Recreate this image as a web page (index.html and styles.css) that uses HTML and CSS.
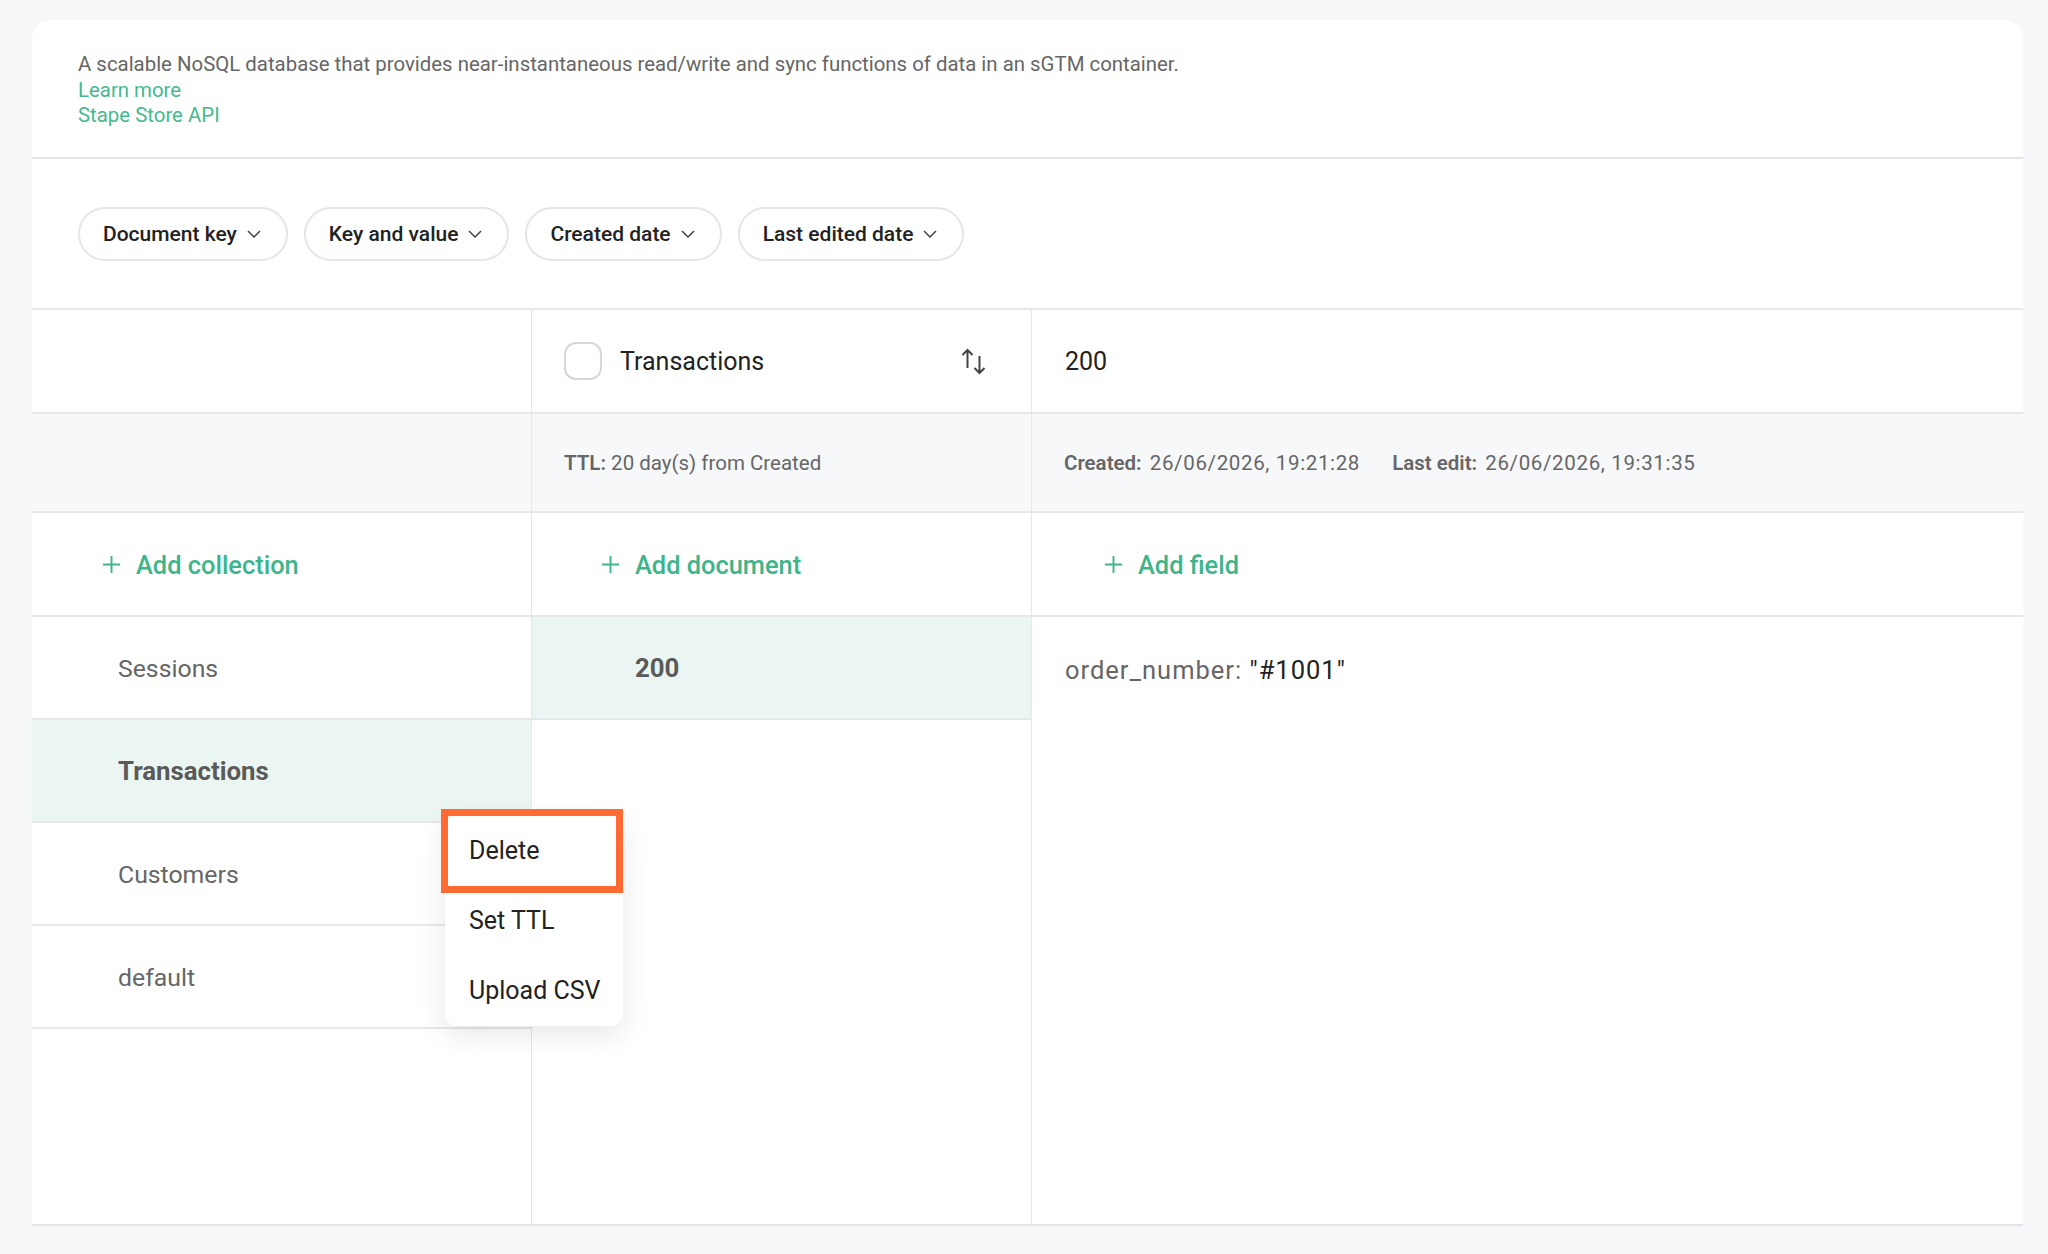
FILE: index.html
```html
<!DOCTYPE html>
<html lang="en">
<head>
  <meta charset="UTF-8" />
  <title>Stape Store</title>
  <link rel="stylesheet" href="styles.css">
</head>
<body>

<div class="card">
  <div class="intro">
    <p>A scalable NoSQL database that provides near-instantaneous read/write and sync functions of data in an sGTM container.</p>
    <a href="#">Learn more</a>
    <a href="#">Stape Store API</a>
  </div>

  <div class="filters">
    <button class="pill">Document key <svg class="chev" viewBox="0 0 14 8"><path d="M1 1l6 6 6-6"/></svg></button>
    <button class="pill">Key and value <svg class="chev" viewBox="0 0 14 8"><path d="M1 1l6 6 6-6"/></svg></button>
    <button class="pill">Created date <svg class="chev" viewBox="0 0 14 8"><path d="M1 1l6 6 6-6"/></svg></button>
    <button class="pill">Last edited date <svg class="chev" viewBox="0 0 14 8"><path d="M1 1l6 6 6-6"/></svg></button>
  </div>

  <div class="grid">
    <!-- header row -->
    <div class="cell head"></div>
    <div class="cell head doc-head">
      <span class="check"></span>
      <span class="coll-name">Transactions</span>
      <svg class="sort" viewBox="0 0 28 28"><path d="M7.5 21V3M2.5 8l5-5 5 5M19.5 9v17M14.5 21l5 5 5-5"/></svg>
    </div>
    <div class="cell head field-head">200</div>

    <!-- meta row -->
    <div class="cell meta"></div>
    <div class="cell meta"><span><b class="ttl">TTL:</b> 20 day(s) from Created</span></div>
    <div class="cell meta"><span><b>Created:</b> <span class="val">26/06/2026, 19:21:28</span> <b class="gap">Last edit:</b> <span class="val">26/06/2026, 19:31:35</span></span></div>

    <!-- add row -->
    <div class="cell add add-coll"><svg class="plus" viewBox="0 0 20 20"><path d="M10 1v18M1 10h18"/></svg>Add collection</div>
    <div class="cell add add-doc"><svg class="plus" viewBox="0 0 20 20"><path d="M10 1v18M1 10h18"/></svg>Add document</div>
    <div class="cell add add-field"><svg class="plus" viewBox="0 0 20 20"><path d="M10 1v18M1 10h18"/></svg>Add field</div>

    <!-- lists -->
    <div class="col collections">
      <div class="item">Sessions</div>
      <div class="item active">Transactions</div>
      <div class="item">Customers</div>
      <div class="item">default</div>

      <div class="menu">
        <div class="menu-item">Delete</div>
        <div class="menu-item">Set TTL</div>
        <div class="menu-item">Upload CSV</div>
        <span class="mark"></span>
      </div>
    </div>
    <div class="col documents">
      <div class="item active doc">200</div>
    </div>
    <div class="col fields">
      <div class="field"><span class="key">order_number:</span> "#1001"</div>
    </div>
  </div>
</div>

</body>
</html>
```

FILE: styles.css
```css
body {
  margin: 0;
  background: #f7f8fa;
  font-family: Roboto, "Liberation Sans", Arial, sans-serif;
  color: #222;
}

.card {
  margin: 20px 25px 0 32px;
  background: #fff;
  border-radius: 20px 20px 0 0;
  border-bottom: 2px solid #e3e4e8;
}

.intro {
  padding: 32px 46px 28px;
  border-bottom: 2px solid #e4e4ea;
  font-size: 20.4px;
  line-height: 25.5px;
}

.intro p {
  margin: 0;
  color: #666;
}

.intro a {
  display: block;
  color: #45b98f;
  text-decoration: none;
}

.filters {
  display: flex;
  gap: 16px;
  padding: 48px 46px 47px;
  border-bottom: 2px solid #e6e7eb;
}

.pill {
  display: flex;
  align-items: center;
  gap: 10px;
  height: 54px;
  padding: 0 25px 0 23px;
  background: #fff;
  border: 2px solid #e4e5e8;
  border-radius: 27px;
  font-family: inherit;
  font-size: 21px;
  font-weight: 500;
  color: #222;
}

.chev {
  width: 14px;
  height: 8px;
  fill: none;
  stroke: #444;
  stroke-width: 1.5;
}

.grid {
  display: grid;
  grid-template-columns: 500px 500px 1fr;
}

.cell {
  display: flex;
  align-items: center;
  box-sizing: border-box;
  padding-top: 2px;
  border-bottom: 2px solid #e6e7eb;
  border-right: 1px solid #e6e7eb;
}

.cell:nth-child(3n) {
  border-right: none;
}

.head {
  height: 104px;
}

.doc-head {
  padding: 0 43px 0 32px;
}

.check {
  width: 38px;
  height: 38px;
  box-sizing: border-box;
  border: 2px solid #d3d8df;
  border-radius: 12px;
  margin-right: 18px;
}

.coll-name {
  flex: 1;
  padding-top: 2px;
  font-size: 25px;
}

.sort {
  width: 28px;
  height: 28px;
  fill: none;
  stroke: #444;
  stroke-width: 2;
}

.field-head {
  padding-left: 33px;
  font-size: 25px;
}

.meta {
  height: 99px;
  background: #f7f8fa;
  padding-left: 32px;
  font-size: 20.5px;
  color: #666;
}

.meta b {
  font-weight: 600;
  margin-right: 3px;
}

.meta b.ttl {
  margin-right: 0;
}

.meta b.gap {
  margin-left: 27px;
}

.meta .val {
  letter-spacing: 0.65px;
}

.add {
  height: 104px;
  font-size: 25.4px;
  font-weight: 500;
  color: #3db58b;
}

.add-coll { padding-left: 70px; }
.add-doc { padding-left: 69px; }
.add-field { padding-left: 72px; }

.plus {
  width: 19px;
  height: 19px;
  margin-right: 15px;
  fill: none;
  stroke: #3db58b;
  stroke-width: 2;
}

.col {
  height: 607px;
  border-right: 1px solid #e6e7eb;
}

.col.fields {
  border-right: none;
}

.collections {
  position: relative;
}

.item {
  display: flex;
  align-items: center;
  box-sizing: border-box;
  height: 103px;
  padding: 2px 0 0 86px;
  border-bottom: 2px solid #e6e7eb;
  font-size: 24.8px;
  color: #666;
}

.item.active {
  background: #ebf6f2;
  font-weight: 700;
  font-size: 25.8px;
  color: #5a5a5a;
}

.item.doc {
  padding-left: 103px;
}

.field {
  padding: 38px 33px;
  font-size: 25.5px;
  letter-spacing: 1px;
  color: #222;
}

.field .key {
  color: #666;
}

.menu {
  position: absolute;
  left: 413px;
  top: 199px;
  width: 178px;
  background: #fff;
  border-radius: 12px;
  box-shadow: 0 8px 30px rgba(0, 0, 0, 0.1);
  z-index: 2;
}

.menu-item {
  height: 70px;
  display: flex;
  align-items: center;
  padding-left: 24px;
  font-size: 25px;
  color: #222;
}

.mark {
  position: absolute;
  left: -4px;
  top: -7px;
  width: 182px;
  height: 84px;
  box-sizing: border-box;
  border: 7px solid #ff6b33;
}
```
